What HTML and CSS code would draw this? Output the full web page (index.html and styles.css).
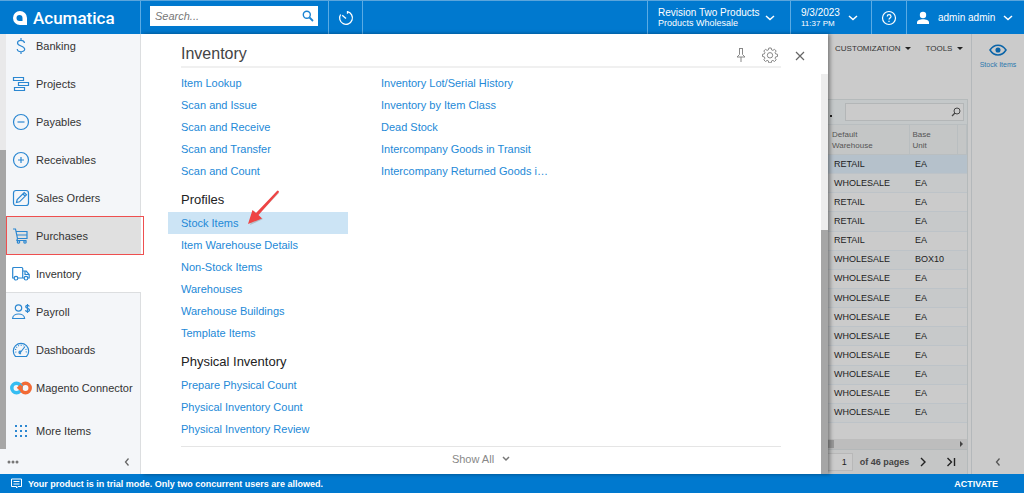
FILE: index.html
```html
<!DOCTYPE html>
<html lang="en">
<head>
<meta charset="utf-8">
<meta name="viewport" content="width=device-width, initial-scale=1">
<title>Acumatica - Inventory</title>
<link rel="stylesheet" href="styles.css">
</head>
<body>
<header class="topbar">
  <a class="brand" href="#">
    <svg width="16" height="16" viewBox="0 0 16 16" fill="#fff"><path fill-rule="evenodd" d="M8 1a7 7 0 1 0 0 14h7V8a7 7 0 0 0-7-7zm-.5 4A3 3 0 0 1 10.500 8v3h-3a3 3 0 0 1 0-6z"/></svg>
    <span>Acumatica</span>
  </a>
  <form class="search">
    <input class="search-input" type="text" placeholder="Search..." aria-label="Search">
    <button class="search-go" type="button" aria-label="Run search"><svg width="12" height="12" viewBox="0 0 12 12" fill="none" stroke="#1b83d2"><circle cx="4.800" cy="4.800" r="3.500" stroke-width="1.400"/><path d="M7.500 7.500l3.500 3.500" stroke-width="1.800"/></svg></button>
  </form>
  <button class="top-cell timer" type="button" aria-label="Recent"><svg width="16" height="16" viewBox="0 0 16 16" fill="none" stroke="#fff" stroke-width="1.300"><path d="M9.500 3.800V1.700A6.400 6.400 0 1 1 2.600 4.500"/><path d="M8 8.500L4.200 5.200"/></svg></button>
  <div class="spacer"></div>
  <button class="top-cell company" type="button"><span class="two"><span class="line-a">Revision Two Products</span><span class="line-b">Products Wholesale</span></span><svg class="chev" width="10" height="6" viewBox="0 0 10 6"><path d="M1 1l4 3.500L9 1"/></svg></button>
  <button class="top-cell date" type="button"><span class="two"><span class="line-a">9/3/2023</span><span class="line-c">11:37 PM</span></span><svg class="chev" width="10" height="6" viewBox="0 0 10 6"><path d="M1 1l4 3.500L9 1"/></svg></button>
  <button class="top-cell help" type="button" aria-label="Help"><svg width="16" height="16" viewBox="0 0 16 16" fill="none" stroke="#fff" stroke-width="1.200"><circle cx="8" cy="8" r="6.500"/><path d="M6.200 6.500c0-2.400 3.800-2.400 3.800 0 0 1.400-2 1.500-2 3.100M8 10.800v1.200"/></svg></button>
  <button class="top-cell user" type="button"><svg width="14" height="14" viewBox="0 0 14 14" fill="#fff"><circle cx="7" cy="4" r="3.200"/><path d="M1 13v-1.500C1 9.500 4 8.300 7 8.300s6 1.200 6 3.200V13z"/></svg><span class="line-a">admin admin</span><svg class="chev" width="10" height="6" viewBox="0 0 10 6"><path d="M1 1l4 3.500L9 1"/></svg></button>
</header>

<div class="main">
  <aside class="sidebar">
    <div class="side-scroll">
      <div class="side-bar"><div class="side-thumb"></div></div>
      <nav class="modules">
        <a href="#"><svg viewBox="0 0 18 18"><path d="M9 1v2.500M9 14.500V17M12.500 6C12 2.600 5.500 2.600 5.500 6c0 3.400 7.200 2.600 7.200 6.200 0 3.400-7 3.400-7.500-.2"/></svg>Banking</a>
        <a href="#"><svg viewBox="0 0 18 18"><path d="M1.500 2.500h10v3h-10zM6.500 7.500h10v3h-10zM2.500 12.500h10v3h-10z"/></svg>Projects</a>
        <a href="#"><svg viewBox="0 0 18 18"><circle cx="9" cy="9" r="7.500"/><path d="M5.500 9h7"/></svg>Payables</a>
        <a href="#"><svg viewBox="0 0 18 18"><circle cx="9" cy="9" r="7.500"/><path d="M6 9h6M9 6v6"/></svg>Receivables</a>
        <a href="#"><svg viewBox="0 0 18 18"><rect x="1.500" y="1.500" width="15" height="15" rx="2.500"/><path d="M4.500 13.500l.7-3 7-7 2.300 2.300-7 7zM11 5l2 2"/></svg>Sales Orders</a>
        <a href="#" class="marked"><svg viewBox="0 0 18 18"><path d="M1 2h2.500l2 9.500h9.500V4.500H4.200M5 8h10M5.500 11.500l-.6 2h9.500"/><circle cx="6.500" cy="14.900" r="1.200"/><circle cx="13" cy="14.900" r="1.200"/></svg>Purchases</a>
        <a href="#" class="current"><svg viewBox="0 0 18 18"><path d="M2.300 13H.7V3.500q0-1 1-1h8q1 0 1 1V13H5.800M10.700 6h3.500l3 3.500V13h-1.200M10.700 13h1.500M13 6.500v3h4"/><circle cx="4" cy="13.200" r="1.800"/><circle cx="14" cy="13.200" r="1.800"/></svg>Inventory</a>
        <a href="#"><svg viewBox="0 0 18 18"><circle cx="6.500" cy="5" r="3.200"/><path d="M.6 15.500c0-6 12-6 12 0z"/><path d="M15.500 1v9M17.300 3.500c-.3-1.700-3.600-1.500-3.600.2 0 2 3.800 1.300 3.800 3.400 0 1.900-3.700 2-4 0"/></svg>Payroll</a>
        <a href="#"><svg viewBox="0 0 18 18"><path d="M3.500 15.500a7.700 7.700 0 1 1 11 0zM8 12l5-6.500M9 12.500a1.300 1.300 0 1 1-.2-2.300"/><path stroke-dasharray="1 1.500" d="M4 11.500a5.200 5.200 0 0 1 7.500-6.500M13.800 8q.8 1.500.4 3.500"/></svg>Dashboards</a>
        <a href="#"><svg class="magento" viewBox="0 0 22 16"><circle cx="6.500" cy="8" r="4.700" stroke="#35bdf2"/><circle cx="15.500" cy="8" r="4.700" stroke="#f26a35"/><path stroke="#35bdf2" d="M9 4Q10.500 5 11.300 6.500"/><path stroke="#f26a35" d="M8 9l3.500-3.500"/></svg>Magento Connector</a>
        <a href="#" class="more"><svg viewBox="0 0 18 18" class="dots9"><path d="M3 4h12M3 9h12M3 14h12"/></svg>More Items</a>
      </nav>
    </div>
    <div class="side-foot">
      <button type="button" aria-label="Options"><svg width="12" height="4" viewBox="0 0 12 4" fill="#777"><circle cx="2" cy="2" r="1.500"/><circle cx="6" cy="2" r="1.500"/><circle cx="10" cy="2" r="1.500"/></svg></button>
      <button type="button" aria-label="Collapse menu"><svg width="6" height="8" viewBox="0 0 6 8" fill="none" stroke="#666" stroke-width="1.300"><path d="M4.500.5L1.500 4l3 3.500"/></svg></button>
    </div>
  </aside>

  <section class="panel">
    <div class="panel-head">
      <h1>Inventory</h1>
      <div class="tools">
        <button type="button" aria-label="Pin"><svg width="10" height="16" viewBox="0 0 10 16" fill="none" stroke="#888"><path d="M3 1.500h4M3.500 1.500v6L1 10h8L6.500 7.500v-6M5 10v5"/></svg></button>
        <button type="button" aria-label="Settings"><svg width="16" height="16" viewBox="0 0 16 16" fill="none" stroke="#888"><path d="M6.800 1h2.400l.4 1.900 1.300.5 1.600-1.100 1.700 1.700-1.100 1.600.5 1.300 1.900.4v2.200l-1.900.4-.5 1.300 1.100 1.600-1.700 1.700-1.600-1.100-1.300.5-.4 1.900H6.800l-.4-1.900-1.300-.5-1.600 1.100-1.700-1.700 1.100-1.600-.5-1.300-1.900-.4V7.300l1.900-.4.5-1.300L1.800 4l1.700-1.700 1.600 1.100 1.300-.5z"/><circle cx="8" cy="8.300" r="2.700"/></svg></button>
      </div>
      <button class="close" type="button" aria-label="Close"><svg width="10" height="10" viewBox="0 0 10 10" fill="none" stroke="#666" stroke-width="1.200"><path d="M1 1l8 8M9 1L1 9"/></svg></button>
    </div>
    <div class="panel-body">
      <div class="links">
        <div class="two-col">
          <ul>
            <li><a href="#">Item Lookup</a></li>
            <li><a href="#">Scan and Issue</a></li>
            <li><a href="#">Scan and Receive</a></li>
            <li><a href="#">Scan and Transfer</a></li>
            <li><a href="#">Scan and Count</a></li>
          </ul>
          <ul>
            <li><a href="#">Inventory Lot/Serial History</a></li>
            <li><a href="#">Inventory by Item Class</a></li>
            <li><a href="#">Dead Stock</a></li>
            <li><a href="#">Intercompany Goods in Transit</a></li>
            <li><a href="#">Intercompany Returned Goods i…</a></li>
          </ul>
        </div>
        <h2>Profiles</h2>
        <ul>
          <li class="selected"><a href="#">Stock Items</a>
            <svg class="arrow" width="36" height="38" viewBox="0 0 36 38"><g fill="#999" opacity=".5"><path d="M33 4L12 26l5 4L4 36l4-14 3 3L31 2z"/></g><path fill="#ee4444" d="M31.500 1.500q1.500 0 1.500 1.500L12.500 26l3.500 3.500L2 35l4.500-14 3.500 3z"/></svg>
          </li>
          <li><a href="#">Item Warehouse Details</a></li>
          <li><a href="#">Non-Stock Items</a></li>
          <li><a href="#">Warehouses</a></li>
          <li><a href="#">Warehouse Buildings</a></li>
          <li><a href="#">Template Items</a></li>
        </ul>
        <h2>Physical Inventory</h2>
        <ul>
          <li><a href="#">Prepare Physical Count</a></li>
          <li><a href="#">Physical Inventory Count</a></li>
          <li><a href="#">Physical Inventory Review</a></li>
        </ul>
        <button class="show-all" type="button">Show All<svg width="8" height="6" viewBox="0 0 8 6" fill="none" stroke="#777" stroke-width="1.500"><path d="M1 1l3 3 3-3"/></svg></button>
      </div>
      <div class="panel-bar"><div class="panel-thumb"></div></div>
    </div>
  </section>

  <section class="workspace">
    <div class="menu"><button type="button">CUSTOMIZATION<i></i></button><button type="button">TOOLS<i></i></button></div>
    <div class="grid">
      <div class="grid-tools"><span class="dot"></span><label class="filter"><input type="text" aria-label="Filter"><svg width="10" height="10" viewBox="0 0 10 10" fill="none" stroke="#444"><circle cx="6" cy="4" r="3"/><path d="M4 6L1 9" stroke-width="1.300"/></svg></label></div>
      <div class="table-wrap">
        <table>
          <thead><tr><th>Default<br>Warehouse</th><th>Base<br>Unit</th><th></th></tr></thead>
          <tbody>
            <tr class="active"><td>RETAIL</td><td>EA</td><td></td></tr>
            <tr><td>WHOLESALE</td><td>EA</td><td></td></tr>
            <tr><td>RETAIL</td><td>EA</td><td></td></tr>
            <tr><td>RETAIL</td><td>EA</td><td></td></tr>
            <tr><td>RETAIL</td><td>EA</td><td></td></tr>
            <tr><td>WHOLESALE</td><td>BOX10</td><td></td></tr>
            <tr><td>WHOLESALE</td><td>EA</td><td></td></tr>
            <tr><td>WHOLESALE</td><td>EA</td><td></td></tr>
            <tr><td>WHOLESALE</td><td>EA</td><td></td></tr>
            <tr><td>WHOLESALE</td><td>EA</td><td></td></tr>
            <tr><td>WHOLESALE</td><td>EA</td><td></td></tr>
            <tr><td>WHOLESALE</td><td>EA</td><td></td></tr>
            <tr><td>WHOLESALE</td><td>EA</td><td></td></tr>
            <tr><td>WHOLESALE</td><td>EA</td><td></td></tr>
          </tbody>
        </table>
      </div>
      <div class="hbar"><span class="hthumb"></span><span class="harrow"></span></div>
      <div class="pager">
        <input type="text" value="1" aria-label="Page">
        <span>of 46 pages</span>
        <button type="button" aria-label="Next page"><svg width="10" height="10" viewBox="0 0 10 10"><path d="M3 1l4 4-4 4"/></svg></button>
        <button type="button" aria-label="Last page"><svg width="10" height="10" viewBox="0 0 10 10"><path d="M1.500 1l4 4-4 4M8.500 1v8"/></svg></button>
      </div>
    </div>
  </section>

  <aside class="rail">
    <a href="#"><svg width="18" height="12" viewBox="0 0 18 12" fill="none" stroke="#0a64a8" stroke-width="1.500"><path d="M1 6c4-6.500 12-6.500 16 0-4 6.500-12 6.500-16 0z"/><circle cx="9" cy="6" r="1.800" fill="#0a64a8"/></svg>Stock Items</a>
    <button type="button" aria-label="Expand"><svg width="6" height="8" viewBox="0 0 6 8" fill="none" stroke="#555" stroke-width="1.300"><path d="M4.500.5L1.500 4l3 3.500"/></svg></button>
  </aside>
</div>

<footer class="status">
  <svg width="11" height="11" viewBox="0 0 11 11" fill="none" stroke="#fff"><path d="M.5 1h10v7.500H7L5.500 10V8.500h-5zM2.500 3.500h6M2.500 6h6"/></svg>
  <span>Your product is in trial mode. Only two concurrent users are allowed.</span>
  <button type="button">ACTIVATE</button>
</footer>
</body>
</html>
```
FILE: styles.css
```css
* { box-sizing: border-box; }
body {
  margin: 0;
  height: 100vh;
  display: flex;
  flex-direction: column;
  font-family: "Liberation Sans", Arial, sans-serif;
  font-size: 11px;
  color: #333;
  background: #fff;
}
button { border: 0; padding: 0; margin: 0; background: none; font: inherit; color: inherit; }
a { text-decoration: none; color: inherit; }
ul { list-style: none; margin: 0; padding: 0; }
input { font: inherit; border: 0; padding: 0; border-radius: 0; min-width: 0; }
svg { flex: none; display: block; }

.topbar { flex: none; display: flex; height: 34px; background: #0079cf; border-top: 1px solid #5aa5dc; color: #fff; }
.brand { width: 141px; display: flex; align-items: center; gap: 5px; padding-left: 12px; border-right: 1px solid #5aabe4; font: 500 17px/18px Roboto, sans-serif; }
.search { display: flex; width: 168px; height: 20px; margin: 5px 10px 0 9px; background: #fff; padding: 0 4px 0 5px; align-items: center; }
.search-input { flex: 1; font-style: italic; background: transparent; outline: 0; }
.search-input::placeholder { color: #777; opacity: 1; }
.top-cell { display: flex; align-items: center; border-left: 1px solid #5aabe4; }
.timer { width: 35px; justify-content: center; border-right: 1px solid #5aabe4; }
.spacer { flex: 1; }
.two { display: flex; flex-direction: column; text-align: left; }
.line-a { font-size: 10px; line-height: 11px; }
.line-b { font-size: 9px; line-height: 11px; }
.line-c { font-size: 8px; line-height: 11px; }
.chev { fill: none; stroke: #fff; stroke-width: 1.5; }
.company { width: 143px; padding-left: 10px; gap: 5px; }
.date { width: 81px; padding-left: 10px; gap: 8px; }
.help { width: 35px; justify-content: center; }
.user { width: 118px; padding-left: 9px; gap: 8px; }

.main { flex: 1; min-height: 0; display: flex; }
.sidebar { width: 141px; display: flex; flex-direction: column; background: #f4f6f9; border-right: 1px solid #dcdee0; position: relative; z-index: 3; }
.side-scroll { flex: 1; min-height: 0; display: flex; overflow-x: visible; overflow-y: clip; }
.side-bar { width: 6px; background: #e9e9ea; display: flex; flex-direction: column; justify-content: flex-end; }
.side-thumb { height: 72%; background: #a6a6a6; }
.modules { flex: 1; margin: -7px -1px 0 0; }
.modules a { display: flex; align-items: center; gap: 6px; height: 38px; padding-left: 6px; color: #333; white-space: nowrap; }
.modules svg { width: 18px; height: 18px; fill: none; stroke: #2b87d1; stroke-width: 1.2; }
.modules .marked { position: relative; background: #e0e0e0; }
.marked::after { content: ""; position: absolute; inset: -1px -3px 0 0; border: 1px solid #ee4f4f; }
.modules .current { background: #fff; border-bottom: 1px solid #dcdee0; }
.modules .magento { width: 22px; height: 16px; stroke-width: 3.5; margin: 0 -2px; }
.modules .more { height: 48px; }
.modules .dots9 { stroke-width: 2; stroke-dasharray: 2 3; }
.side-foot { flex: none; height: 25px; display: flex; align-items: center; justify-content: space-between; padding: 0 10px 0 7px; }

.panel { flex: 1; display: flex; flex-direction: column; background: #fff; position: relative; z-index: 2; box-shadow: 2px 0 4px #0006; min-width: 0; }
.panel-head { flex: none; display: flex; padding-left: 40px; height: 40px; }
h1 { flex: 1; margin: 0; padding-top: 10px; font: 400 16px/20px "Liberation Sans", Arial, sans-serif; color: #444; border-bottom: 2px solid #f0f0f0; height: 34px; }
.tools { display: flex; gap: 16px; height: 34px; padding: 10px 3px 0 0; align-items: center; border-bottom: 2px solid #f0f0f0; }
.close { width: 47px; height: 34px; padding: 9px 0 0 14px; display: flex; align-items: center; }
.panel-body { flex: 1; min-height: 0; display: flex; }
.links { flex: 1; padding-left: 27px; display: flex; flex-direction: column; }
.two-col { display: flex; gap: 20px; margin-top: -2px; }
.links ul { width: 180px; }
.links li { height: 22px; padding-left: 13px; line-height: 22px; color: #2389d7; white-space: nowrap; position: relative; }
.links .selected { background: #cce4f5; }
.arrow { position: absolute; left: 78px; top: -23px; }
h2 { margin: 0 0 0 13px; height: 30px; padding-top: 6px; font: 400 13px/24px "Liberation Sans", Arial, sans-serif; color: #222; }
.show-all { margin: auto 40px 0 13px; height: 28px; border-top: 1px solid #e5e5e5; display: flex; align-items: center; justify-content: center; gap: 8px; padding-bottom: 3px; color: #888; }
.panel-bar { width: 7px; background: #ededed; display: flex; flex-direction: column; justify-content: flex-end; }
.panel-thumb { height: 61%; background: #a6a6a6; }

.workspace { width: 144px; background: #cbcbcb; display: flex; flex-direction: column; border-right: 1px solid #b4b8bb; padding-right: 3px; }
.menu { flex: none; height: 65px; display: flex; gap: 14px; align-items: flex-start; padding: 9px 0 0 7px; font-size: 8px; line-height: 11px; }
.menu button { display: flex; align-items: center; gap: 5px; }
.menu i { border: 3px solid transparent; border-top-color: #222; border-bottom: 0; }
.grid { flex: 1; min-height: 0; display: flex; flex-direction: column; border: 1px solid #b5babb; border-left: 0; border-bottom: 0; }
.grid-tools { flex: none; height: 24px; display: flex; align-items: center; background: #c4c8c9; padding: 0 3px 0 2px; }
.dot { width: 2px; height: 2px; background: #222; margin: 7px 13px 0 0; }
.filter { flex: 1; min-width: 0; display: flex; align-items: center; height: 18px; background: #cbcbcb; border: 1px solid #b3b6b7; padding-right: 2px; }
.filter input { flex: 1; width: 0; background: transparent; }
.table-wrap { flex: 1; min-height: 0; padding-bottom: 16px; }
table { width: 100%; height: 100%; border-collapse: collapse; table-layout: fixed; font-size: 9px; line-height: 11px; border-bottom: 1px solid #b0b5b8; }
th { height: 30px; padding: 0 0 0 3px; text-align: left; font-size: 8px; font-weight: 400; color: #555; background: #c4c6c6; border: 1px solid #b9bec0; border-left: 0; }
th:nth-child(1) { width: 81px; padding-left: 4px; }
th:nth-child(2) { width: 48px; }
td { padding: 0 0 0 6px; border-bottom: 1px solid #bdc3c8; color: #222; }
tr:nth-child(even) td { background: #c7c9ca; }
.active td { background: #b5c1cb; }
.hbar { flex: none; height: 10px; background: #bdbdbd; display: flex; justify-content: space-between; align-items: center; padding-right: 4px; }
.hthumb { width: 6px; height: 8px; background: #999; }
.harrow { border: 3px solid transparent; border-left-color: #444; border-right: 0; }
.pager { flex: none; height: 25px; display: flex; align-items: center; background: #c5c6c6; border-top: 1px solid #b4b8b9; font-weight: 700; font-size: 9px; color: #444; }
.pager input { width: 26px; height: 18px; background: #cbcbcb; border: 1px solid #b8b8b8; border-left: 0; text-align: right; padding-right: 5px; font-weight: 400; color: #222; }
.pager span { width: 63px; padding-left: 7px; white-space: nowrap; }
.pager button { width: 29px; padding-left: 6px; }
.pager svg { fill: none; stroke: #222; stroke-width: 1.4; }

.rail { width: 52px; background: #cbcbcb; display: flex; flex-direction: column; justify-content: space-between; align-items: center; padding: 10px 0 8px; }
.rail a { display: flex; flex-direction: column; align-items: center; gap: 5px; font-size: 7px; line-height: 8px; color: #2b78ae; white-space: nowrap; }

.status { flex: none; display: flex; align-items: center; height: 19px; background: #0079cf; color: #fff; font-size: 9px; font-weight: 700; padding: 0 26px 0 11px; gap: 6px; }
.status button { margin-left: auto; }
```
